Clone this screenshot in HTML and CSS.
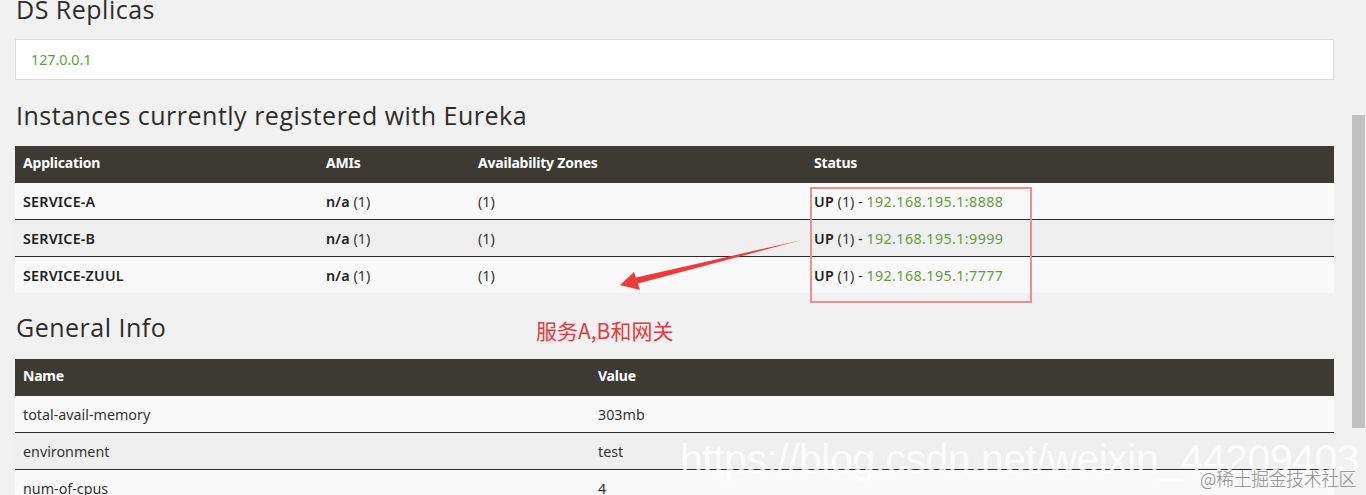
FILE: index.html
```html
<!DOCTYPE html>
<html lang="zh">
<head>
<meta charset="utf-8">
<title>Eureka</title>
<link rel="stylesheet" href="styles.css">
</head>
<body>
<div class="page">
  <main class="content">
    <h2 class="title first">DS Replicas</h2>
    <div class="replicas"><a class="link">127.0.0.1</a></div>

    <h2 class="title t-inst">Instances currently registered with Eureka</h2>
    <table class="grid apps">
      <thead>
        <tr><th class="c-app">Application</th><th class="c-ami">AMIs</th><th class="c-az">Availability Zones</th><th>Status</th></tr>
      </thead>
      <tbody>
        <tr><td><b>SERVICE-A</b></td><td><b>n/a</b> (1)</td><td>(1)</td><td><b>UP</b> (1) - <a class="link ip">192.168.195.1:8888</a></td></tr>
        <tr><td><b>SERVICE-B</b></td><td><b>n/a</b> (1)</td><td>(1)</td><td><b>UP</b> (1) - <a class="link ip">192.168.195.1:9999</a></td></tr>
        <tr><td><b>SERVICE-ZUUL</b></td><td><b>n/a</b> (1)</td><td>(1)</td><td><b>UP</b> (1) - <a class="link ip">192.168.195.1:7777</a></td></tr>
      </tbody>
    </table>

    <h2 class="title t-gen">General Info</h2>
    <table class="grid info">
      <thead>
        <tr><th class="c-name">Name</th><th>Value</th></tr>
      </thead>
      <tbody>
        <tr><td>total-avail-memory</td><td>303mb</td></tr>
        <tr><td>environment</td><td>test</td></tr>
        <tr><td>num-of-cpus</td><td>4</td></tr>
      </tbody>
    </table>

    <div class="mark-box"></div>
    <svg class="arrow" width="230" height="70" viewBox="0 0 230 70">
      <path d="M212 12 L44 50 L46 56 Z" fill="#f03a3a"/>
      <path d="M30 57 L44 44 L50 62 Z" fill="#f03a3a"/>
    </svg>
    <div class="note">服务A,B和网关</div>
  </main>
  <div class="scrollbar"><div class="thumb"></div></div>
  <div class="wm-url">https://blog.csdn.net/weixin_44209403</div>
  <div class="wm-site">@稀土掘金技术社区</div>
</div>
</body>
</html>
```
FILE: styles.css
```css
html, body {
  margin: 0;
  padding: 0;
  background: #f1f1f1;
  overflow: hidden;
}
.page {
  display: flex;
  height: 495px;
  position: relative;
  overflow: hidden;
}
.content {
  flex: 1;
  padding: 0 17px 0 15px;
  position: relative;
  font-family: "Noto Sans", "Open Sans", sans-serif;
  font-size: 14.3px;
  color: #333;
}
.title {
  font-family: "Open Sans", "Noto Sans", sans-serif;
  font-weight: 500;
  font-size: 25px;
  line-height: 30px;
  height: 30px;
  margin: 0;
  padding-left: 1px;
  color: #2f2d2a;
  letter-spacing: 0.5px;
}
.title.first { margin-top: -6px; }
.replicas {
  margin-top: 15px;
  height: 39px;
  background: #fff;
  border: 1px solid #dcdcdc;
  display: flex;
  align-items: center;
  padding-left: 15px;
}
.link {
  color: #6a9a3c;
  text-decoration: none;
}
.ip { letter-spacing: 0.4px; }
.t-inst { margin-top: 20px; }
.t-gen { margin-top: 19px; }
.grid {
  margin-top: 16px;
  width: 100%;
  border-collapse: collapse;
}
.grid.info { margin-top: 17px; }
.grid th {
  background: #3c3a33;
  color: #fff;
  text-align: left;
  font-weight: 700;
  font-size: 14px;
  height: 37px;
  line-height: 34px;
  padding: 0 8px;
  vertical-align: top;
  letter-spacing: -0.2px;
}
.grid td {
  height: 36px;
  padding: 0 8px;
  text-align: left;
}
.grid td b { font-weight: 600; color: #222; letter-spacing: 0.2px; }
.grid tbody tr:nth-child(odd) td { background: #f9f9f9; }
.grid tbody tr:nth-child(even) td { background: #efefef; }
.grid tbody tr + tr td { border-top: 1px solid #2b2b2b; }
.c-app { width: 287px; }
.c-ami { width: 136px; }
.c-az { width: 320px; }
.c-name { width: 559px; }

.mark-box {
  position: absolute;
  left: 810px;
  top: 187px;
  width: 218px;
  height: 112px;
  border: 2px solid #ea9090;
}
.arrow {
  position: absolute;
  left: 590px;
  top: 228px;
}
.note {
  position: absolute;
  left: 536px;
  top: 316px;
  font-family: "Noto Sans CJK SC", sans-serif;
  font-size: 21px;
  line-height: 28px;
  color: #e8383d;
  letter-spacing: 0;
}
.scrollbar {
  width: 15px;
  flex: none;
  background: #f1f1f1;
  padding-top: 115px;
}
.thumb {
  width: 13px;
  margin-left: 1px;
  height: 313px;
  background: #c1c1c1;
}
.wm-url {
  position: absolute;
  left: 680px;
  top: 436px;
  font-family: "Liberation Sans", sans-serif;
  font-size: 41px;
  line-height: 46px;
  color: rgba(255,255,255,0.8);
  letter-spacing: -0.5px;
  white-space: nowrap;
}
.wm-site {
  position: absolute;
  left: 1200px;
  top: 466px;
  font-family: "Noto Sans CJK SC", sans-serif;
  font-weight: 300;
  font-size: 18px;
  line-height: 24px;
  color: #8a8a8a;
  letter-spacing: -0.5px;
  white-space: nowrap;
}
```
